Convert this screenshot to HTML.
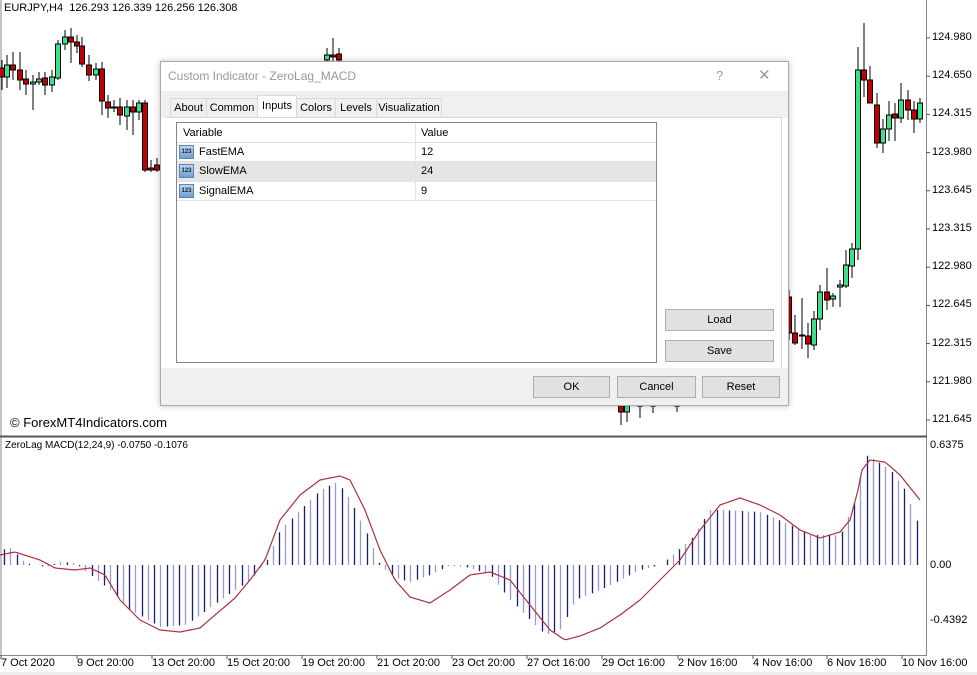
<!DOCTYPE html>
<html><head><meta charset="utf-8">
<style>
body{margin:0;width:977px;height:675px;overflow:hidden;background:#fff;font-family:"Liberation Sans",Tahoma,sans-serif;position:relative}
.a{position:absolute;white-space:nowrap}
.t{font-size:11px;color:#000}
.dlg{position:absolute;left:160px;top:61px;width:627px;height:343px;background:#fff;border:1px solid #aaa;box-shadow:0 0 6px rgba(0,0,0,.25)}
.btn{position:absolute;background:#e1e1e1;border:1px solid #adadad;font-size:11px;text-align:center;line-height:20px;color:#000}
.tab{position:absolute;top:98px;height:19px;font-size:11px;line-height:19px;text-align:center;border:1px solid #d9d9d9;border-bottom:none;background:#f0f0f0}
.ic{position:absolute;width:13px;height:12px;background:linear-gradient(#bcd6f0,#6f9fd0);border:1px solid #5a86b8;font-size:6px;color:#123;line-height:12px;text-align:center;font-weight:bold}
</style></head><body>
<svg id="s" width="977" height="675" style="position:absolute;left:0;top:0"></svg>

<div class="a t" style="left:4px;top:2px">EURJPY,H4&nbsp; 126.293 126.339 126.256 126.308</div>
<div class="a" style="left:10px;top:415px;font-size:13px">© ForexMT4Indicators.com</div>
<div class="a" style="left:5px;top:440px;font-size:10px">ZeroLag MACD(12,24,9) -0.0750 -0.1076</div>

<div class="dlg"></div>
<div class="a" style="left:168px;top:69px;font-size:12px;color:#999">Custom Indicator - ZeroLag_MACD</div>
<div class="a" style="left:716px;top:68px;font-size:13px;color:#999">?</div>
<div class="a" style="left:758px;top:66px;font-size:15px;color:#999">✕</div>
<div class="a" style="left:161px;top:91px;width:627px;height:27px;background:#f0f0f0"></div>
<div class="tab" style="left:170px;width:35px">About</div>
<div class="tab" style="left:206px;width:50px">Common</div>
<div class="tab" style="left:296px;width:38px">Colors</div>
<div class="tab" style="left:335px;width:40px">Levels</div>
<div class="tab" style="left:376px;width:64px">Visualization</div>
<div class="tab" style="left:257px;width:38px;top:95px;height:23px;background:#fff;line-height:21px">Inputs</div>
<div class="a" style="left:166px;top:117px;width:615px;height:251px;background:#fff;border-top:1px solid #d9d9d9;border-right:1px solid #d9d9d9"></div>
<div class="a" style="left:161px;top:368px;width:627px;height:37px;background:#f0f0f0"></div>

<div class="a" style="left:176px;top:122px;width:479px;height:239px;border:1px solid #828790;background:#fff"></div>
<div class="a" style="left:177px;top:162px;width:479px;height:19px;background:#e5e5e5"></div>
<div class="a" style="left:177px;top:142px;width:479px;height:1px;background:#e3e3e3"></div>
<div class="a" style="left:177px;top:161px;width:479px;height:1px;background:#e3e3e3"></div>
<div class="a" style="left:177px;top:181px;width:479px;height:1px;background:#e3e3e3"></div>
<div class="a" style="left:177px;top:200px;width:479px;height:1px;background:#e3e3e3"></div>
<div class="a" style="left:415px;top:123px;width:1px;height:78px;background:#e3e3e3"></div>
<div class="a t" style="left:183px;top:127px">Variable</div>
<div class="a t" style="left:421px;top:127px">Value</div>
<div class="ic" style="left:179px;top:145px">123</div>
<div class="ic" style="left:179px;top:164px">123</div>
<div class="ic" style="left:179px;top:184px">123</div>
<div class="a t" style="left:199px;top:146px">FastEMA</div>
<div class="a t" style="left:199px;top:165px">SlowEMA</div>
<div class="a t" style="left:199px;top:185px">SignalEMA</div>
<div class="a t" style="left:421px;top:146px">12</div>
<div class="a t" style="left:421px;top:165px">24</div>
<div class="a t" style="left:421px;top:185px">9</div>

<div class="btn" style="left:665px;top:309px;width:107px">Load</div>
<div class="btn" style="left:665px;top:340px;width:107px">Save</div>
<div class="btn" style="left:533px;top:376px;width:75px">OK</div>
<div class="btn" style="left:617px;top:376px;width:77px">Cancel</div>
<div class="btn" style="left:702px;top:376px;width:76px">Reset</div>

<div id="lbl"></div>
<script>
var s=document.getElementById('s'),h='';
function L(x1,y1,x2,y2,c,w){h+='<line x1="'+x1+'" y1="'+y1+'" x2="'+x2+'" y2="'+y2+'" stroke="'+c+'" stroke-width="'+(w||1)+'"/>';}
function R(x,y,w,hh,f,st){h+='<rect x="'+x+'" y="'+y+'" width="'+w+'" height="'+hh+'" fill="'+f+'"'+(st?' stroke="'+st+'" stroke-width="1"':'')+'/>';}
L(1,0,1,655,'#888');L(926.5,0,926.5,655,'#888');L(0,436.5,927,436.5,'#555',2);L(0,655.5,927,655.5,'#888');
R(0,672,977,3,'#eee');
var c=[[2,68,77,60,90,0],[7,65,77,55,88,1],[13,65,70,52,80,0],[20,70,80,52,90,0],[26,79,84,70,95,0],[33,82,84,75,110,1],[39,79,82,72,85,1],[45,78,85,72,95,0],[52,77,85,70,92,1],[58,44,78,40,80,1],[65,37,44,30,50,1],[71,37,42,28,63,0],[77,42,46,35,53,0],[82,46,64,37,67,0],[89,65,75,55,81,0],[96,69,75,63,80,1],[102,69,101,62,115,0],[108,102,108,95,118,0],[114,107,108,100,112,0],[120,107,115,98,125,0],[127,107,116,100,130,1],[133,107,112,100,135,0],[139,103,112,100,120,1],[145,103,170,100,172,0],[151,168,170,160,172,0],[157,165,170,158,172,0],
[327,55,60,48,61,1],[333,55,57,38,61,0],[339,54,60,48,61,0],
[621,405,412,400,425,0],[627,405,412,400,422,1],[640,405,406,404,418,0],[653,405,406,404,413,0],[677,405,406,404,412,0],
[789,297,333,290,340,0],[795,333,343,315,345,0],[802,335,336,298,349,0],[808,336,344,323,358,0],[814,319,345,311,350,1],[820,292,319,285,330,1],[827,292,300,268,310,0],[833,296,299,293,307,1],[840,285,287,280,307,1],[846,265,286,250,288,1],[852,249,266,243,278,1],[858,70,249,47,260,1],[864,70,80,23,97,0],[870,80,103,66,103,0],[877,105,143,93,148,0],[883,129,143,119,153,1],[889,115,129,101,141,1],[895,114,118,103,141,0],[901,100,118,83,123,1],[908,100,110,90,120,0],[914,110,119,101,133,0],[920,103,119,98,123,1]];
c.forEach(function(k){L(k[0],k[3],k[0],k[4],'#000');R(k[0]-2.5,k[1],5,Math.max(1,k[2]-k[1]),k[5]?'#3de08a':'#c00000','#000');});
var pl=['124.980','124.650','124.315','123.980','123.645','123.315','122.980','122.645','122.315','121.980','121.645'];
var lb='';
pl.forEach(function(p,i){var y=38+i*38.2;L(926,y,930,y,'#555');lb+='<div class="a t" style="left:932px;top:'+(y-7)+'px">'+p+'</div>';});
lb+='<div class="a t" style="left:930px;top:439px">0.6375</div><div class="a t" style="left:930px;top:559px">0.00</div><div class="a t" style="left:930px;top:614px">-0.4392</div>';
var d=[['7 Oct 2020',0],['9 Oct 20:00',76],['13 Oct 20:00',151],['15 Oct 20:00',226],['19 Oct 20:00',301],['21 Oct 20:00',376],['23 Oct 20:00',451],['27 Oct 16:00',526],['29 Oct 16:00',601],['2 Nov 16:00',677],['4 Nov 16:00',752],['6 Nov 16:00',826],['10 Nov 16:00',901]];
d.forEach(function(k){L(k[1]+1,655,k[1]+1,659,'#555');lb+='<div class="a t" style="left:'+(k[1]+1)+'px;top:657px">'+k[0]+'</div>';});
document.getElementById('lbl').innerHTML=lb;
function interp(p,x){for(var i=1;i+2<p.length;i+=2){if(x<=p[i+1]){var x0=p[i-1],y0=p[i],x1=p[i+1],y1=p[i+2];var t=(x-x0)/(x1-x0);return y0+(y1-y0)*t;}}return p[p.length-1];}
var hp=[0,550,10,548,25,563,45,567,60,562,75,563,90,575,110,590,130,610,160,627,185,625,200,615,220,600,250,580,265,563,280,530,300,510,320,490,337,482,350,500,365,530,380,565,395,578,410,582,430,575,450,565,470,568,490,575,510,600,530,620,545,635,560,630,575,600,600,590,620,580,640,570,660,565,690,540,710,510,720,510,760,512,790,525,810,535,840,535,855,500,865,455,875,460,890,470,905,490,920,530];
var sp=[0,555,15,552,40,560,55,568,75,570,90,568,105,575,120,600,140,620,160,630,180,632,200,628,215,615,235,598,250,580,265,560,280,520,300,495,320,480,340,476,350,480,365,510,380,550,395,580,410,597,430,603,450,590,470,575,490,572,510,580,530,605,550,630,565,640,580,636,600,628,620,615,640,600,660,580,680,560,700,530,720,505,740,498,760,505,780,515,800,530,820,538,840,532,850,520,858,490,862,470,870,460,885,462,900,475,920,500];
var n=0;for(var x=4;x<=921;x+=6.25,n++){var y=interp(hp,x);var xx=Math.round(x)+0.5;L(xx,565,xx,y,n%2?'#9a9ad0':'#1c1c70',1.3);}
var pts=[];for(var x=0;x<=921;x+=2)pts.push(x+','+interp(sp,x).toFixed(1));
h+='<polyline points="'+pts.join(' ')+'" fill="none" stroke="#a8323f" stroke-width="1.2" stroke-linejoin="round"/>';
s.innerHTML=h;
</script>
</body></html>
